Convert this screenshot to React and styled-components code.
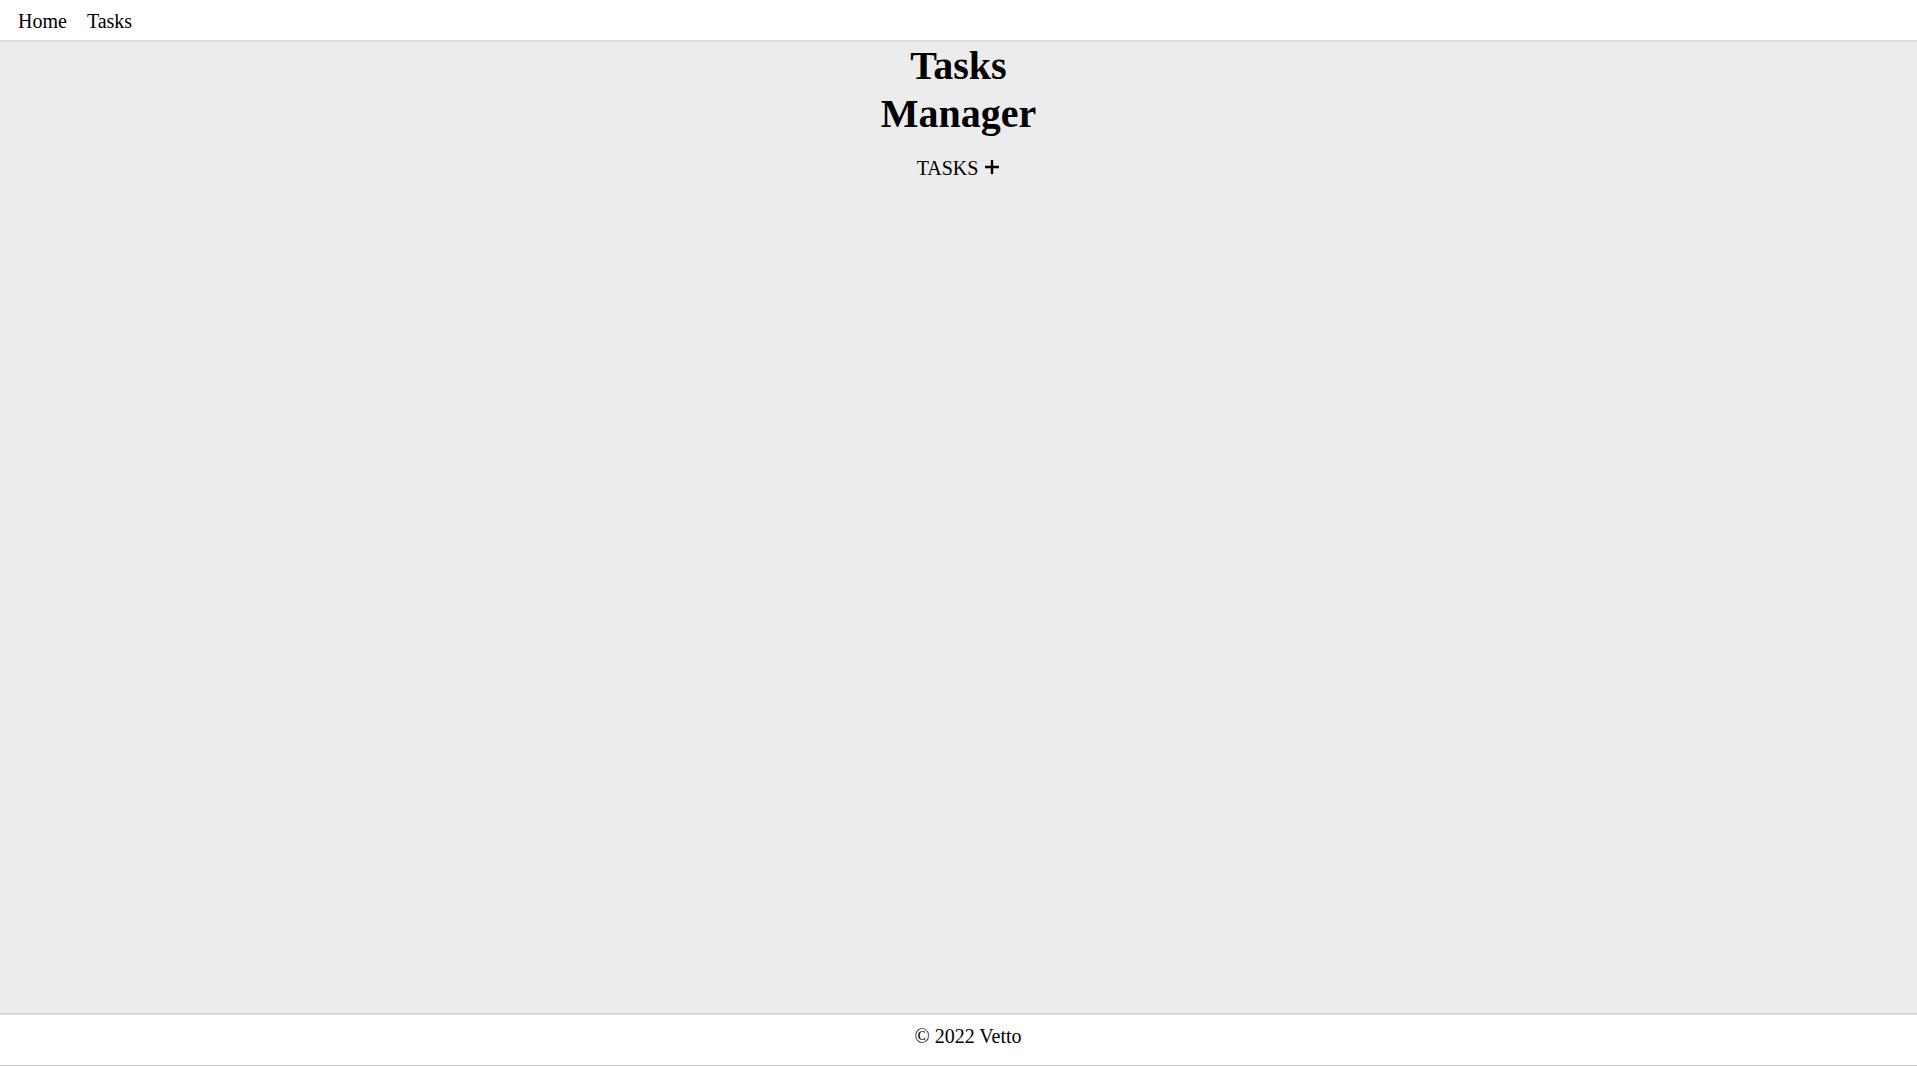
import React from "react";
import styled, { createGlobalStyle } from "styled-components";

const GlobalStyle = createGlobalStyle`
  html, body { margin: 0; padding: 0; }
  body {
    font-family: "Liberation Serif", "Times New Roman", serif;
    font-size: 20px;
    color: #000;
    background: #ececec;
  }
  * { box-sizing: border-box; }
`;

const Page = styled.div`
  min-height: 100vh;
  display: flex;
  flex-direction: column;
`;

const Header = styled.header`
  height: 42px;
  background: #fff;
  border-bottom: 2px solid #dcdcdc;
  display: flex;
  align-items: flex-start;
  gap: 20px;
  padding: 10px 0 0 18px;
`;

const NavLink = styled.a`
  color: #000;
  text-decoration: none;
  font-size: 20px;
  line-height: 22px;
  cursor: pointer;
`;

const Main = styled.main`
  flex: 1;
  display: flex;
  flex-direction: column;
  align-items: center;
`;

const Title = styled.h1`
  margin: 0;
  max-width: 180px;
  text-align: center;
  font-size: 40px;
  line-height: 48px;
  font-weight: bold;
`;

const TasksRow = styled.div`
  margin-top: 19px;
  display: flex;
  align-items: flex-end;
  gap: 6px;
  font-size: 20px;
  line-height: 22px;
`;

const PlusButton = styled.button`
  border: none;
  background: transparent;
  padding: 0;
  margin: 0 0 4px;
  display: flex;
  cursor: pointer;
`;

const Footer = styled.footer`
  height: 53px;
  background: #fff;
  border-top: 2px solid #d9d9d9;
  border-bottom: 1px solid #c8c8c8;
  padding: 10px 0 0 19px;
  text-align: center;
  font-size: 20px;
  line-height: 22px;
`;

const Plus = () => (
  <svg width="16" height="16" viewBox="0 0 16 16">
    <path d="M8 1v14M1 8h14" stroke="#000" strokeWidth="2.4" fill="none" />
  </svg>
);

export default function App() {
  return (
    <>
      <GlobalStyle />
      <Page>
        <Header>
          <NavLink>Home</NavLink>
          <NavLink>Tasks</NavLink>
        </Header>
        <Main>
          <Title>Tasks Manager</Title>
          <TasksRow>
            <span>TASKS</span>
            <PlusButton aria-label="Add task">
              <Plus />
            </PlusButton>
          </TasksRow>
        </Main>
        <Footer>© 2022 Vetto</Footer>
      </Page>
    </>
  );
}
